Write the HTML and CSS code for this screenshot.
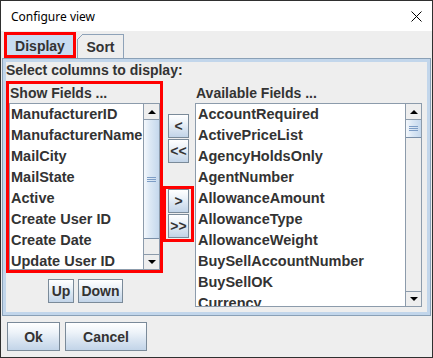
FILE: index.html
```html
<!DOCTYPE html>
<html>
<head>
<meta charset="utf-8">
<title>Configure view</title>
<link rel="stylesheet" href="styles.css">
</head>
<body>
<div class="window">
  <div class="titlebar">
    <span class="title">Configure view</span>
    <svg class="close" width="11" height="11" viewBox="0 0 11 11"><path d="M0.5 0.5 L10.5 10.5 M10.5 0.5 L0.5 10.5" stroke="#000" stroke-width="1" fill="none"/></svg>
  </div>
  <div class="tabs">
    <div class="tab tab-active">Display</div>
    <div class="tab tab-sort">Sort</div>
  </div>
  <div class="panel">
    <div class="caption">Select columns to display:</div>
    <div class="columns">
      <div class="col-left">
        <div class="group-show highlight">
          <div class="list-label">Show Fields ...</div>
          <div class="list list-show">
            <ul class="items">
              <li>ManufacturerID</li>
              <li>ManufacturerName</li>
              <li>MailCity</li>
              <li>MailState</li>
              <li>Active</li>
              <li>Create User ID</li>
              <li>Create Date</li>
              <li>Update User ID</li>
            </ul>
            <div class="vscroll">
              <div class="sb-btn"><span class="tri-up"></span></div>
              <div class="sb-thumb thumb-show"><span class="grip"></span></div>
              <div class="sb-track"></div>
              <div class="sb-btn sb-btn-down"><span class="tri-down"></span></div>
            </div>
          </div>
        </div>
        <div class="order-buttons">
          <button class="btn btn-up">Up</button>
          <button class="btn btn-down">Down</button>
        </div>
      </div>
      <div class="col-mid">
        <div class="move-group move-remove">
          <button class="btn btn-move">&lt;</button>
          <button class="btn btn-move">&lt;&lt;</button>
        </div>
        <div class="move-group move-add highlight">
          <button class="btn btn-move">&gt;</button>
          <button class="btn btn-move">&gt;&gt;</button>
        </div>
      </div>
      <div class="col-right">
        <div class="list-label">Available Fields ...</div>
        <div class="list list-avail">
          <ul class="items">
            <li>AccountRequired</li>
            <li>ActivePriceList</li>
            <li>AgencyHoldsOnly</li>
            <li>AgentNumber</li>
            <li>AllowanceAmount</li>
            <li>AllowanceType</li>
            <li>AllowanceWeight</li>
            <li>BuySellAccountNumber</li>
            <li>BuySellOK</li>
            <li>Currency</li>
          </ul>
          <div class="vscroll">
            <div class="sb-btn"><span class="tri-up"></span></div>
            <div class="sb-thumb thumb-avail"><span class="grip"></span></div>
            <div class="sb-track"></div>
            <div class="sb-btn sb-btn-down"><span class="tri-down"></span></div>
          </div>
        </div>
      </div>
    </div>
  </div>
  <div class="footer">
    <button class="btn btn-ok">Ok</button>
    <button class="btn btn-cancel">Cancel</button>
  </div>
</div>
</body>
</html>
```

FILE: styles.css
```css
* { box-sizing: border-box; }

body {
  margin: 0;
  font-family: "Liberation Sans", Arial, sans-serif;
  color: #333333;
}

.window {
  width: 433px;
  height: 358px;
  border: 1px solid #2f2f2f;
  background: #eeeeee;
  display: flex;
  flex-direction: column;
}

.titlebar {
  height: 30px;
  background: #ffffff;
  display: flex;
  align-items: center;
  padding-left: 10px;
  flex-shrink: 0;
}

.title {
  flex: 1;
  font-family: "Noto Sans", "Open Sans", sans-serif;
  font-size: 12px;
  color: #000;
  padding-top: 1px;
}

.close {
  margin-right: 10px;
  display: block;
}

.tabs {
  height: 27px;
  display: flex;
  align-items: flex-end;
  padding-left: 3px;
  flex-shrink: 0;
}

.tab {
  font-weight: bold;
  font-size: 14px;
  display: flex;
  align-items: center;
  justify-content: center;
}

.tab-active {
  width: 72px;
  height: 26px;
  border: 3px solid #ff0000;
  background: #c8dcf1;
  padding-top: 1px;
}

.tab-sort {
  position: relative;
  width: 47px;
  height: 24px;
  margin-left: 1px;
  border: 1px solid #8ea2b8;
  border-bottom: none;
  background: #eeeeee;
  padding-top: 1px;
}

.tab-sort::before {
  content: "";
  position: absolute;
  top: -1px;
  left: -1px;
  width: 6px;
  height: 6px;
  background: linear-gradient(135deg, #eeeeee 0, #eeeeee 42%, #8ea2b8 42%, #8ea2b8 58%, transparent 58%);
}

.panel {
  margin: 0 1px 0 1px;
  border: 1px solid #8aa0b6;
  box-shadow: inset 0 0 0 3px #c2d6eb;
  padding: 3px 3px 8px 3px;
}

.caption {
  font-weight: bold;
  font-size: 14px;
  height: 16px;
  line-height: 16px;
}

.columns {
  display: flex;
  margin-top: 3px;
}

.col-left {
  width: 157px;
  display: flex;
  flex-direction: column;
}

.highlight {
  border: 3px solid #ff0000;
}

.group-show {
  height: 192px;
  display: flex;
  flex-direction: column;
}

.list-label {
  font-weight: bold;
  font-size: 14px;
  height: 19px;
  line-height: 19px;
  padding-left: 1px;
}

.list {
  display: flex;
  border: 1px solid #8c9bab;
  background: #ffffff;
}

.list-show {
  height: 167px;
}

.list-avail {
  height: 204px;
}

.items {
  list-style: none;
  margin: 0;
  padding: 0 0 0 1px;
  flex: 1;
  overflow: hidden;
  font-weight: bold;
  font-size: 14.5px;
}

.items li {
  height: 21px;
  line-height: 21px;
  white-space: nowrap;
}

.list-avail .items {
  padding-left: 2px;
}

.vscroll {
  width: 16px;
  border-left: 1px solid #8c9bab;
  background: #eeeeee;
  display: flex;
  flex-direction: column;
  flex-shrink: 0;
}

.sb-btn {
  height: 16px;
  border-bottom: 1px solid #8c9bab;
  background: #eeeeee;
  display: flex;
  align-items: center;
  justify-content: center;
  flex-shrink: 0;
}

.sb-btn-down {
  border-bottom: none;
  border-top: 1px solid #8c9bab;
  height: 15px;
}

.tri-up {
  width: 0;
  height: 0;
  border-left: 4px solid transparent;
  border-right: 4px solid transparent;
  border-bottom: 4px solid #000;
}

.tri-down {
  width: 0;
  height: 0;
  border-left: 4px solid transparent;
  border-right: 4px solid transparent;
  border-top: 4px solid #000;
}

.sb-thumb {
  border-bottom: 1px solid #7a8fa8;
  background: linear-gradient(to right, #f4f8fc 0%, #dce8f5 40%, #c5d8ed 100%);
  display: flex;
  align-items: center;
  justify-content: center;
  flex-shrink: 0;
}

.thumb-show {
  height: 119px;
}

.thumb-avail {
  height: 18px;
}

.grip {
  width: 9px;
  height: 5px;
  background: repeating-linear-gradient(to bottom, #7d9dc6 0px, #7d9dc6 1px, transparent 1px, transparent 2px);
}

.sb-track {
  flex: 1;
}

.order-buttons {
  display: flex;
  justify-content: center;
  gap: 4px;
  margin-top: 6px;
  padding-left: 2px;
}

.btn {
  font-family: "Liberation Sans", Arial, sans-serif;
  font-weight: bold;
  font-size: 14px;
  color: #333333;
  border: 1px solid #7a8a99;
  background: linear-gradient(to bottom, #ffffff 0%, #edf3f9 35%, #dbe6f2 60%, #c2d4e8 100%);
  padding: 0;
  margin: 0;
  display: flex;
  align-items: center;
  justify-content: center;
}

.btn-up {
  width: 26px;
  height: 24px;
}

.btn-down {
  width: 45px;
  height: 24px;
}

.col-mid {
  width: 32px;
  display: flex;
  flex-direction: column;
  padding-top: 33px;
}

.move-group {
  display: flex;
  flex-direction: column;
  gap: 1px;
}

.move-remove {
  padding-left: 5px;
}

.move-add {
  width: 31px;
  margin-top: 23px;
  padding: 0 2px 1px 2px;
}

.btn-move {
  width: 21px;
  height: 24px;
}

.col-right {
  width: 227px;
  padding-top: 3px;
}

.footer {
  display: flex;
  gap: 5px;
  margin-top: 6px;
  padding-left: 6px;
}

.btn-ok {
  width: 53px;
  height: 29px;
}

.btn-cancel {
  width: 82px;
  height: 29px;
}
```
